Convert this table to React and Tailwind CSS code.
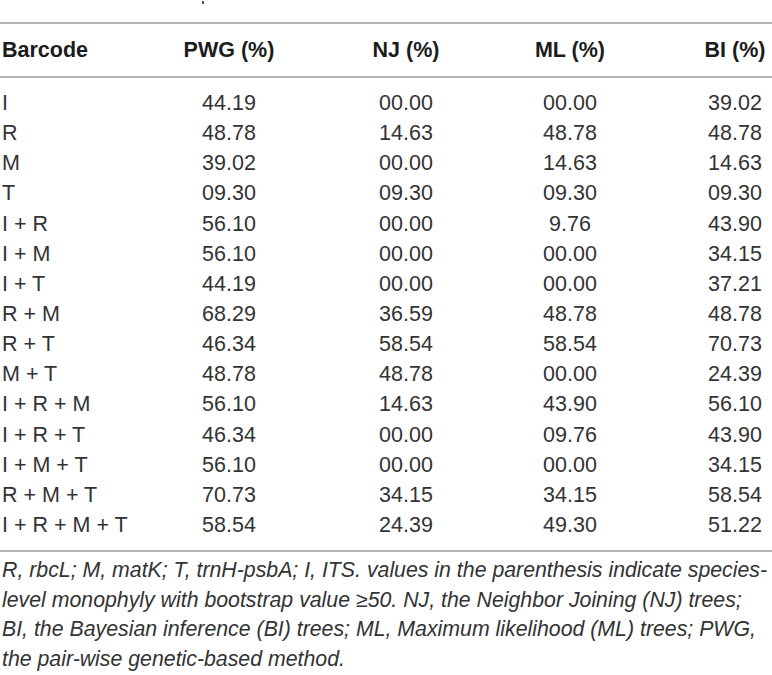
const ROWS = [
  ["I", "44.19", "00.00", "00.00", "39.02"],
  ["R", "48.78", "14.63", "48.78", "48.78"],
  ["M", "39.02", "00.00", "14.63", "14.63"],
  ["T", "09.30", "09.30", "09.30", "09.30"],
  ["I + R", "56.10", "00.00", "9.76", "43.90"],
  ["I + M", "56.10", "00.00", "00.00", "34.15"],
  ["I + T", "44.19", "00.00", "00.00", "37.21"],
  ["R + M", "68.29", "36.59", "48.78", "48.78"],
  ["R + T", "46.34", "58.54", "58.54", "70.73"],
  ["M + T", "48.78", "48.78", "00.00", "24.39"],
  ["I + R + M", "56.10", "14.63", "43.90", "56.10"],
  ["I + R + T", "46.34", "00.00", "09.76", "43.90"],
  ["I + M + T", "56.10", "00.00", "00.00", "34.15"],
  ["R + M + T", "70.73", "34.15", "34.15", "58.54"],
  ["I + R + M + T", "58.54", "24.39", "49.30", "51.22"],
];

const HEAD = ["Barcode", "PWG (%)", "NJ (%)", "ML (%)", "BI (%)"];

// column alignment: barcode flush left, the rest centred in their slot
const CELL = [
  "pl-[2px] text-left",
  "text-center",
  "text-center",
  "text-center",
  "pl-[53px] text-center",
];

const NOTE = [
  "R, rbcL; M, matK; T, trnH-psbA; I, ITS. values in the parenthesis indicate species-",
  "level monophyly with bootstrap value \u226550. NJ, the Neighbor Joining (NJ) trees;",
  "BI, the Bayesian inference (BI) trees; ML, Maximum likelihood (ML) trees; PWG,",
  "the pair-wise genetic-based method.",
];

function Row({ cells, head }) {
  return (
    <div
      className={`grid grid-cols-[141px_176px_178px_150px_127px] whitespace-nowrap ${
        head ? "h-[30px] font-bold text-[#1c1c1c]" : "h-[30.15px] text-[#333]"
      }`}
    >
      {cells.map((c, i) => (
        <div key={i} className={CELL[i]}>
          {c}
        </div>
      ))}
    </div>
  );
}

export default function App() {
  return (
    <div className="h-[675px] w-[772px] overflow-hidden bg-white font-['Liberation_Sans',Arial,sans-serif] text-[21.5px] leading-[30px]">
      {/* tail of the cropped caption above the table */}
      <div className="flex h-[22px] items-start pl-[202px]">
        <span className="mt-[1px] h-[3px] w-[2px] bg-[#555]" />
      </div>
      <div className="h-[2px] bg-[#b4b4b4]" />

      <div className="pb-[11px] pt-[11px]">
        <Row cells={HEAD} head />
      </div>
      <div className="h-[2px] bg-[#b4b4b4]" />

      <div className="pb-[10px] pt-[10px]">
        {ROWS.map((r) => (
          <Row key={r[0]} cells={r} />
        ))}
      </div>
      <div className="h-[2px] bg-[#b4b4b4]" />

      <div className="pl-[2px] pt-[4px] text-[21.3px] italic leading-[29.5px] text-[#333]">
        {NOTE.map((l) => (
          <div key={l} className="whitespace-nowrap">
            {l}
          </div>
        ))}
      </div>
    </div>
  );
}
